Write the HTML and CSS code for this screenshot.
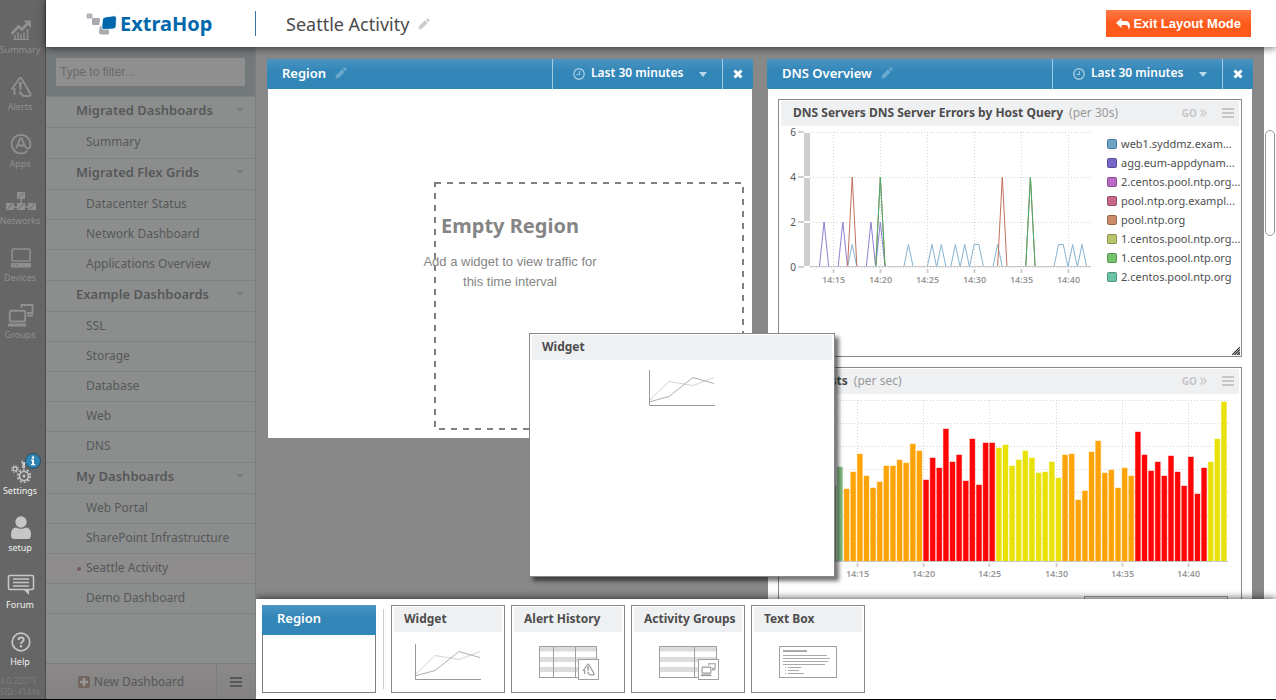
FILE: index.html
```html
<!DOCTYPE html>
<html lang="en">
<head>
    <meta charset="UTF-8">
    <meta name="viewport" content="width=device-width, initial-scale=1.0">
    <title>Seattle Activity - ExtraHop</title>
    <link rel="stylesheet" href="styles.css">
</head>
<body>
    <!-- Shared icons -->
    <svg class="defs" width="0" height="0">
        <symbol id="pencil" viewBox="0 0 12 12">
            <path d="M0.5 11.5 L1 8.3 L7 2.3 L9.7 5 L3.7 11 Z M7.8 1.5 L9 0.4 Q9.5 0 10 0.4 L11.6 2 Q12 2.5 11.6 3 L10.5 4.2 Z" fill="currentColor"/>
        </symbol>
        <symbol id="clock" viewBox="0 0 12 12">
            <circle cx="6" cy="6" r="5.2" fill="none" stroke="currentColor" stroke-width="1.4"/>
            <path d="M6.5 3 V6.5 H3.5" fill="none" stroke="currentColor" stroke-width="1.2"/>
        </symbol>
        <symbol id="close" viewBox="0 0 10 10">
            <path d="M1.5 1.5 L8.5 8.5 M8.5 1.5 L1.5 8.5" stroke="currentColor" stroke-width="3"/>
        </symbol>
        <symbol id="bars" viewBox="0 0 12 10">
            <path d="M0 1 H12 M0 5 H12 M0 9 H12" stroke="currentColor" stroke-width="2"/>
        </symbol>
        <symbol id="chevrons" viewBox="0 0 7 8">
            <path d="M0.5 0.5 L3 4 L0.5 7.5 M3.5 0.5 L6 4 L3.5 7.5" fill="none" stroke="currentColor" stroke-width="1.2"/>
        </symbol>
        <symbol id="alert" viewBox="0 0 24 22">
            <path d="M2.5 13.5 L10.5 2.5 Q11.5 1 12.5 2.5 L21.5 18 Q22 20 20 20 H14.5 L12.5 18 M5.5 19 V12" fill="none" stroke="currentColor" stroke-width="2"/>
            <path d="M9.5 6 H13 L12 14.5 H10.8 Z" fill="currentColor"/>
            <circle cx="11.4" cy="17" r="1.6" fill="currentColor"/>
        </symbol>
        <symbol id="groups" viewBox="0 0 26 24">
            <path d="M13.5 5 V2 H24.5 V10 H19" fill="none" stroke="currentColor" stroke-width="1.8"/>
            <path d="M19 12.5 H25" stroke="currentColor" stroke-width="2"/>
            <rect x="1.8" y="7.8" width="15.4" height="10.6" rx="1.5" fill="none" stroke="currentColor" stroke-width="2"/>
            <rect x="0" y="20.5" width="18" height="3" fill="currentColor"/>
        </symbol>
        <symbol id="line-chart" viewBox="0 0 66 36">
            <path d="M0 31 L20 11.5 L44 15.5 L65 7.5" fill="none" stroke="#d2d2d2"/>
            <path d="M0 32 L20 26.5 L44 7.5 L65 13.5" fill="none" stroke="#b0b0b0"/>
            <path d="M0.5 0 V35.5 H66" fill="none" stroke="#999"/>
        </symbol>
        <symbol id="table-icon" viewBox="0 0 58 32">
            <path d="M0 3 H58 M0 13.5 H58 M0 23.5 H58" stroke="#dcdcdc" stroke-width="5"/>
            <rect x="0.5" y="0.5" width="57" height="31" fill="none" stroke="#a0a0a0"/>
        </symbol>
    </svg>

    <nav class="rail">
        <div class="rail-top">
            <a href="#" class="rail-item">
                <span class="rail-icon"><svg width="20" height="20" viewBox="0 0 20 20">
                    <path d="M0.5 14 L7.5 6.5 L11 9.5 L16.5 3.5" fill="none" stroke="currentColor" stroke-width="2.8"/>
                    <path d="M12.5 0.5 H20 V8 Z" fill="currentColor"/>
                    <path d="M4 19 V15 M7 19 V12 M10 19 V14 M13 19 V12.5 M16.5 19 V9" stroke="currentColor" stroke-width="1.6"/>
                    <path d="M2 19.5 H18" stroke="currentColor"/>
                </svg></span>
                <span>Summary</span>
            </a>
            <a href="#" class="rail-item">
                <span class="rail-icon"><svg width="24" height="22"><use href="#alert"/></svg></span>
                <span>Alerts</span>
            </a>
            <a href="#" class="rail-item">
                <span class="rail-icon"><svg width="22" height="22" viewBox="0 0 22 22">
                    <path d="M17.5 17.8 A9.3 9.3 0 1 1 20.3 11 V12.5 Q20.3 15.5 17.5 15.5 Q15.8 15.5 15 13.5 L11.8 5.5 H10.2 L6 15.5 M8 12.5 H14" fill="none" stroke="currentColor" stroke-width="1.8"/>
                </svg></span>
                <span>Apps</span>
            </a>
            <a href="#" class="rail-item">
                <span class="rail-icon"><svg width="30" height="19" viewBox="0 0 30 19">
                    <path d="M11 0 H19 V7 H11 Z M0 11 H8 V18 H0 Z M11 11 H19 V18 H11 Z M22 11 H30 V18 H22 Z" fill="currentColor"/>
                    <path d="M15 7 V11 M8 15 H22" stroke="currentColor" stroke-width="1.5"/>
                    <path d="M12.5 6 L17.5 1 M1.5 17 L6.5 12 M12.5 17 L17.5 12 M23.5 17 L28.5 12" stroke="#666"/>
                </svg></span>
                <span>Networks</span>
            </a>
            <a href="#" class="rail-item">
                <span class="rail-icon"><svg width="20" height="20" viewBox="0 0 20 20">
                    <rect x="1" y="1" width="18" height="12" rx="1.5" fill="none" stroke="currentColor" stroke-width="1.6"/>
                    <rect x="0" y="15" width="20" height="4.5" fill="currentColor"/>
                    <path d="M2 17 H3.5 M5 17 H6.5" stroke="#666"/>
                </svg></span>
                <span>Devices</span>
            </a>
            <a href="#" class="rail-item">
                <span class="rail-icon"><svg width="26" height="24"><use href="#groups"/></svg></span>
                <span>Groups</span>
            </a>
        </div>
        <div class="rail-bottom">
            <a href="#" class="rail-item">
                <span class="rail-icon"><svg width="20" height="24" viewBox="0 0 20 24">
                    <circle cx="13" cy="17" r="4.5" fill="none" stroke="currentColor" stroke-width="1.6"/>
                    <circle cx="13" cy="17" r="6.3" fill="none" stroke="currentColor" stroke-width="1.8" stroke-dasharray="2 1.96"/>
                    <circle cx="13" cy="17" r="1.5" fill="currentColor"/>
                    <circle cx="4" cy="10" r="2" fill="none" stroke="currentColor" stroke-width="1.3"/>
                    <circle cx="4" cy="10" r="3.3" fill="none" stroke="currentColor" stroke-width="1.2" stroke-dasharray="1.3 1.3"/>
                    <path d="M11 9 L11.5 5 Q9 3 11.5 0.5 V3 H14.5 V1 Q16 4 14 5.5 V9 Z" fill="currentColor"/>
                </svg></span>
                <span>Settings</span>
                <svg class="badge" width="16" height="16" viewBox="0 0 16 16">
                    <circle cx="8" cy="8" r="7.5" fill="#2f84b5" stroke="#2b5065"/>
                    <path d="M6 6.5 H9 V11 H10.2 V12.3 H6 V11 H7 V7.7 H6 Z" fill="#fff"/>
                    <circle cx="8" cy="4.5" r="1.2" fill="#fff"/>
                </svg>
            </a>
            <a href="#" class="rail-item">
                <span class="rail-icon"><svg width="20" height="24" viewBox="0 0 20 24">
                    <circle cx="10" cy="6" r="5.7" fill="currentColor"/>
                    <path d="M0 19 Q0 11.5 5 11.5 Q10 14 15 11.5 Q20 11.5 20 19 Q20 23 17 23 H3 Q0 23 0 19 Z" fill="currentColor"/>
                </svg></span>
                <span>setup</span>
            </a>
            <a href="#" class="rail-item">
                <span class="rail-icon"><svg width="28" height="22" viewBox="0 0 28 22">
                    <path d="M3 1.5 H25 Q26.5 1.5 26.5 3 V14 Q26.5 15.5 25 15.5 H3 Q1.5 15.5 1.5 14 V3 Q1.5 1.5 3 1.5 Z" fill="none" stroke="currentColor" stroke-width="1.6"/>
                    <path d="M16.5 15.5 L22 21 V15.5 Z" fill="currentColor"/>
                    <path d="M6 5 H22 M6 8.5 H22 M6 12 H22" stroke="currentColor" stroke-width="1.6"/>
                </svg></span>
                <span>Forum</span>
            </a>
            <a href="#" class="rail-item">
                <span class="rail-icon"><svg width="20" height="20" viewBox="0 0 20 20">
                    <circle cx="10" cy="10" r="8.8" fill="none" stroke="currentColor" stroke-width="1.7"/>
                    <path d="M7.5 8 Q7.5 5.5 10 5.5 Q12.7 5.5 12.7 7.8 Q12.7 9 11.3 9.8 Q10 10.5 10 12" fill="none" stroke="currentColor" stroke-width="1.9"/>
                    <circle cx="10" cy="14.3" r="1.2" fill="currentColor"/>
                </svg></span>
                <span>Help</span>
            </a>
            <div class="version">
                <div>4.0.22073</div>
                <div>SID: 4144e</div>
            </div>
        </div>
    </nav>

    <div class="app">
        <header class="topbar">
            <a href="#" class="logo">
                <svg width="31" height="22" viewBox="0 0 31 22">
                    <rect x="0.5" y="0.5" width="6" height="5" rx="1.2" fill="#b3b5b8"/>
                    <path d="M7 5 H13 Q14 5 14 6 L13.5 11 Q13.5 12 12.5 12 H7.5 Q6 12 6 11 V6 Q6 5 7 5 Z" fill="#a9abae"/>
                    <path d="M14 13 H23 V20 Q23 21.500 21.500 21.500 H15.500 Q13 21.500 13 19 Z" fill="#a9abae"/>
                    <path d="M19.5 4 L28 2.8 Q30.500 2.8 30.500 5 L30 13.500 Q29.500 16 27 16 L18 16.500 Q15.500 16.500 15.800 14 L16.500 6.500 Q17 4.300 19.500 4 Z" fill="#0067ac" stroke="#fff" stroke-width="0.800"/>
                </svg>
                <span>ExtraHop</span>
            </a>
            <h1>Seattle Activity</h1>
            <button class="icon-btn edit-title" aria-label="Rename dashboard"><svg width="12" height="12"><use href="#pencil"/></svg></button>
            <button class="exit-btn">
                <svg width="14" height="12" viewBox="0 0 14 12"><path d="M5.5 0 V3 H9 Q14 3 14 8 Q14 10 12.5 11.8 Q13 7 9 7 H5.5 V10 L0 5 Z" fill="#fff"/></svg>
                <span>Exit Layout Mode</span>
            </button>
        </header>

        <div class="content">
            <aside class="sidebar">
                <div class="filter">
                    <input type="text" placeholder="Type to filter..." aria-label="Filter dashboards">
                </div>
                <button class="group">Migrated Dashboards</button>
                <ul>
                    <li><a href="#">Summary</a></li>
                </ul>
                <button class="group">Migrated Flex Grids</button>
                <ul>
                    <li><a href="#">Datacenter Status</a></li>
                    <li><a href="#">Network Dashboard</a></li>
                    <li><a href="#">Applications Overview</a></li>
                </ul>
                <button class="group">Example Dashboards</button>
                <ul>
                    <li><a href="#">SSL</a></li>
                    <li><a href="#">Storage</a></li>
                    <li><a href="#">Database</a></li>
                    <li><a href="#">Web</a></li>
                    <li><a href="#">DNS</a></li>
                </ul>
                <button class="group">My Dashboards</button>
                <ul class="last">
                    <li><a href="#">Web Portal</a></li>
                    <li><a href="#">SharePoint Infrastructure</a></li>
                    <li><a href="#" class="active">Seattle Activity</a></li>
                    <li><a href="#">Demo Dashboard</a></li>
                </ul>
                <div class="sidebar-footer">
                    <button class="new-btn">
                        <svg width="12" height="12" viewBox="0 0 12 12">
                            <rect width="12" height="12" rx="2" fill="#75675f"/>
                            <path d="M6 2 V10 M2 6 H10" stroke="#999" stroke-width="2.4"/>
                        </svg>
                        <span>New Dashboard</span>
                    </button>
                    <button class="list-btn" aria-label="Dashboard menu"><svg width="12" height="10"><use href="#bars"/></svg></button>
                </div>
            </aside>

            <div class="workspace">
                <div class="canvas">
                    <main class="regions">
                        <section class="region">
                            <div class="region-head">
                                <h2>Region</h2>
                                <button class="icon-btn" aria-label="Rename region"><svg width="12" height="12"><use href="#pencil"/></svg></button>
                                <button class="interval"><svg width="12" height="12"><use href="#clock"/></svg><span>Last 30 minutes</span><i class="caret"></i></button>
                                <button class="close" aria-label="Remove region"><svg width="10" height="10"><use href="#close"/></svg></button>
                            </div>
                            <div class="region-body empty">
                                <h3>Empty Region</h3>
                                <p>Add a widget to view traffic for this time interval</p>
                                <svg class="dropzone" width="310" height="248">
                                    <rect x="1" y="1" width="308" height="246" fill="none" stroke="#808080" stroke-width="2" stroke-dasharray="6 6"/>
                                </svg>
                            </div>
                        </section>

                        <section class="region">
                            <div class="region-head">
                                <h2>DNS Overview</h2>
                                <button class="icon-btn" aria-label="Rename region"><svg width="12" height="12"><use href="#pencil"/></svg></button>
                                <button class="interval"><svg width="12" height="12"><use href="#clock"/></svg><span>Last 30 minutes</span><i class="caret"></i></button>
                                <button class="close" aria-label="Remove region"><svg width="10" height="10"><use href="#close"/></svg></button>
                            </div>
                            <div class="region-body">
                                <article class="widget errors">
                                    <div class="widget-head">
                                        <h3>DNS Servers DNS Server Errors by Host Query</h3>
                                        <span class="unit">(per 30s)</span>
                                        <a href="#" class="go">GO <svg width="7" height="8"><use href="#chevrons"/></svg></a>
                                        <button class="menu" aria-label="Widget menu"><svg width="12" height="10"><use href="#bars"/></svg></button>
                                    </div>
                                    <div class="widget-body">
                                        <svg id="errors-chart" class="chart" width="318" height="164"></svg>
                                        <ul class="legend">
                                            <li><i class="blue"></i>web1.syddmz.exam...</li>
                                            <li><i class="violet"></i>agg.eum-appdynam...</li>
                                            <li><i class="pink"></i>2.centos.pool.ntp.org...</li>
                                            <li><i class="rose"></i>pool.ntp.org.exampl...</li>
                                            <li><i class="brown"></i>pool.ntp.org</li>
                                            <li><i class="olive"></i>1.centos.pool.ntp.org...</li>
                                            <li><i class="green"></i>1.centos.pool.ntp.org</li>
                                            <li><i class="teal"></i>2.centos.pool.ntp.org</li>
                                        </ul>
                                    </div>
                                    <svg class="resize" width="8" height="8" viewBox="0 0 8 8"><path d="M0 8 L8 0 M2.5 8 L8 2.5 M5 8 L8 5 M7 8 L8 7" stroke="#333" stroke-width="1.2"/></svg>
                                </article>
                                <article class="widget requests">
                                    <div class="widget-head">
                                        <h3>Requests</h3>
                                        <span class="unit">(per sec)</span>
                                        <a href="#" class="go">GO <svg width="7" height="8"><use href="#chevrons"/></svg></a>
                                        <button class="menu" aria-label="Widget menu"><svg width="12" height="10"><use href="#bars"/></svg></button>
                                    </div>
                                    <svg id="requests-chart" class="chart" width="454" height="190"></svg>
                                    <div class="chart-key"></div>
                                </article>
                            </div>
                        </section>
                    </main>
                    <div class="scrollbar"><div class="thumb"></div></div>

                    <!-- Widget being dragged over the canvas -->
                    <div class="widget dragging">
                        <div class="widget-head"><h3>Widget</h3></div>
                        <svg width="66" height="36"><use href="#line-chart"/></svg>
                    </div>
                </div>

                <footer class="tray">
                    <div class="tile tile-region"><h3>Region</h3></div>
                    <div class="separator"></div>
                    <div class="widget tile">
                        <div class="widget-head"><h3>Widget</h3></div>
                        <svg width="66" height="36"><use href="#line-chart"/></svg>
                    </div>
                    <div class="widget tile">
                        <div class="widget-head"><h3>Alert History</h3></div>
                        <svg class="table-tile" width="58" height="32" viewBox="0 0 58 32">
                            <use href="#table-icon" width="58" height="32"/>
                            <path d="M14.5 0 V32 M36.5 0 V32" stroke="#a0a0a0"/>
                            <rect x="39.5" y="13.5" width="20" height="20" fill="#fff" stroke="#a0a0a0"/>
                            <use href="#alert" x="42" y="17" width="15" height="13" color="#999"/>
                        </svg>
                    </div>
                    <div class="widget tile">
                        <div class="widget-head"><h3>Activity Groups</h3></div>
                        <svg class="table-tile" width="58" height="32" viewBox="0 0 58 32">
                            <use href="#table-icon" width="58" height="32"/>
                            <path d="M35.5 0 V32" stroke="#a0a0a0"/>
                            <rect x="39.5" y="13.5" width="20" height="20" fill="#fff" stroke="#a0a0a0"/>
                            <use href="#groups" x="42" y="16" width="15" height="15" color="#999"/>
                        </svg>
                    </div>
                    <div class="widget tile">
                        <div class="widget-head"><h3>Text Box</h3></div>
                        <svg class="table-tile" width="58" height="32" viewBox="0 0 58 32">
                            <rect x="0.5" y="0.5" width="57" height="31" fill="none" stroke="#a0a0a0"/>
                            <path d="M4 5 H28" stroke="#aaa" stroke-width="2"/>
                            <path d="M4 9.5 H48 M4 12.5 H51 M4 15.5 H49 M4 18.5 H46 M6 21.5 H7 M9 21.5 H22 M6 24.5 H7 M9 24.5 H20 M6 27.5 H7 M9 27.5 H25" stroke="#aaa"/>
                        </svg>
                    </div>
                </footer>
            </div>
        </div>
    </div>

    <script src="charts.js"></script>
</body>
</html>
```

FILE: styles.css
```css
* {
    margin: 0;
    padding: 0;
    box-sizing: border-box;
}

body {
    display: flex;
    height: 100vh;
    overflow: hidden;
    font-family: "Noto Sans", sans-serif;
    font-size: 12px;
    color: #4d4f50;
    background: #fff;
    border-bottom: 1px solid #000;
}

button {
    font: inherit;
    color: inherit;
    background: none;
    border: 0;
    cursor: pointer;
}

a {
    color: inherit;
    text-decoration: none;
}

ul {
    list-style: none;
}

svg {
    display: block;
    flex-shrink: 0;
}

.defs {
    position: absolute;
}

/* Left rail */
.rail {
    width: 46px;
    flex-shrink: 0;
    display: flex;
    flex-direction: column;
    justify-content: space-between;
    background: #666;
    border-right: 1px solid #4c4c4c;
    overflow: hidden;
    color: #8f8f8f;
}

.rail-item {
    position: relative;
    display: flex;
    flex-direction: column;
    align-items: center;
    width: 40px;
    height: 57px;
    padding-top: 15px;
    font-size: 9px;
    line-height: 10px;
}

.rail-icon {
    display: flex;
    align-items: center;
    justify-content: center;
    width: 30px;
    height: 30px;
    margin-left: 2px;
}

.rail-bottom .rail-item {
    color: #f2f2f2;
}

.rail-bottom .rail-icon {
    color: #c6c6c6;
}

.badge {
    position: absolute;
    top: 12px;
    left: 25px;
}

.version {
    padding: 6px 0 2px;
    font-size: 8px;
    line-height: 11px;
    color: #7c7c7c;
    white-space: nowrap;
}

/* Top bar */
.app {
    flex: 1;
    min-width: 0;
    display: flex;
    flex-direction: column;
}

.topbar {
    position: relative;
    z-index: 3;
    display: flex;
    align-items: center;
    height: 47px;
    padding-right: 25px;
    background: #fff;
    box-shadow: 0 1px 8px rgba(0, 0, 0, 0.6);
}

.logo {
    display: flex;
    align-items: center;
    gap: 3px;
    width: 210px;
    height: 25px;
    padding-left: 40px;
    border-right: 1px solid #35779f;
    font-size: 20px;
    font-weight: bold;
    color: #0067ac;
}

.topbar h1 {
    margin-left: 30px;
    font-size: 18px;
    font-weight: normal;
    color: #4a4a4a;
}

.icon-btn {
    color: #69a8cf;
}

.edit-title {
    margin-left: 9px;
    color: #ccc;
}

.exit-btn {
    display: flex;
    align-items: center;
    gap: 3px;
    height: 27px;
    margin-left: auto;
    padding: 0 10px;
    background: linear-gradient(#ff7844, #ff5a1c 50%);
    color: #fff;
    font: bold 13px "Liberation Sans", Arial, sans-serif;
}

/* Sidebar */
.content {
    flex: 1;
    min-height: 0;
    display: flex;
}

.sidebar {
    width: 210px;
    flex-shrink: 0;
    display: flex;
    flex-direction: column;
    background: #8c8e8d;
    border-right: 1px solid #7b7d7e;
    color: #56585a;
}

.filter {
    padding: 11px 10px 10px;
    background: #73787b;
}

.filter input {
    display: block;
    width: 100%;
    height: 28px;
    padding: 0 4px;
    border: 0;
    background: #8f8f8f;
    font: 12px "Liberation Sans", Arial, sans-serif;
}

.filter input::placeholder {
    color: #6b6b6b;
}

.group {
    display: flex;
    align-items: center;
    justify-content: space-between;
    height: 31px;
    padding: 0 11px 4px 30px;
    border-top: 1px solid #7e8182;
    font-size: 13px;
    font-weight: 600;
}

.group::after {
    content: "";
    border: 4px solid transparent;
    border-top: 4px solid #7a7c7d;
    border-bottom: 0;
}

.sidebar ul {
    margin-bottom: 1px;
}

.sidebar .last {
    border-bottom: 1px solid #7e8182;
}

.sidebar li a {
    display: block;
    height: 30px;
    padding-left: 40px;
    border-top: 1px solid #7e8182;
    line-height: 28px;
}

.sidebar li .active {
    padding-left: 31px;
    background: #8e8c8c;
}

.active::before {
    content: "";
    display: inline-block;
    width: 4px;
    height: 4px;
    margin-right: 5px;
    border-radius: 50%;
    background: #75605a;
    vertical-align: middle;
}

.sidebar-footer {
    display: flex;
    height: 36px;
    margin-top: auto;
    background: linear-gradient(#8b8989, #838181);
    border-top: 1px solid #7b7d7e;
}

.new-btn {
    flex: 1;
    display: flex;
    align-items: center;
    justify-content: center;
    gap: 4px;
    border-right: 1px solid #7b7d7e;
}

.list-btn {
    width: 38px;
    display: flex;
    align-items: center;
    justify-content: center;
}

/* Workspace */
.workspace {
    flex: 1;
    min-width: 0;
    display: flex;
    flex-direction: column;
}

.canvas {
    position: relative;
    flex: 1;
    min-height: 0;
    display: flex;
    background: #888;
}

.regions {
    flex: 1;
    min-width: 0;
    display: flex;
    align-items: flex-start;
    gap: 14px;
    padding: 12px 11px 0;
    overflow: hidden;
}

.scrollbar {
    width: 12px;
    padding: 83px 1px 0;
    background: #fff;
}

.thumb {
    height: 106px;
    border: 1px solid #999;
    border-radius: 5px;
}

.region {
    flex: 1;
    min-width: 0;
}

.region-head {
    display: flex;
    align-items: center;
    height: 30px;
    padding-left: 15px;
    background: linear-gradient(#4a95c3, #3386b8 40%);
    color: #fff;
}

.region-head h2 {
    padding-bottom: 3px;
    font-size: 13px;
    font-weight: 600;
}

.region-head .icon-btn {
    margin-left: 9px;
    padding-bottom: 3px;
}

.region-head .interval,
.region-head .close {
    display: flex;
    align-items: center;
    height: 100%;
    border-left: 1px solid #a3cbe2;
}

.interval {
    width: 170px;
    margin-left: auto;
    padding: 0 15px 0 20px;
    font-weight: 600;
}

.interval span {
    padding-bottom: 3px;
}

.interval svg {
    margin-right: 6px;
    color: #a3cbe2;
}

.caret {
    margin-left: auto;
    border: 4px solid transparent;
    border-top: 5px solid #b9d8ea;
    border-bottom: 0;
}

.region-head .close {
    width: 31px;
    justify-content: center;
}

.region-body {
    display: flex;
    flex-direction: column;
    gap: 10px;
    margin: 0 1px;
    padding: 10px;
    background: #fff;
}

.empty {
    position: relative;
    align-items: center;
    min-height: 349px;
    padding-top: 121px;
    color: #858585;
}

.empty h3 {
    font-size: 20px;
    line-height: 32px;
}

.empty p {
    width: 180px;
    font: 13px/20px "Liberation Sans", Arial, sans-serif;
    text-align: center;
}

.dropzone {
    position: absolute;
    right: 8px;
    bottom: 8px;
}

/* Widgets */
.widget {
    background: #fff;
    border: 1px solid #888;
    padding: 1px 2px;
}

.widget-head {
    display: flex;
    align-items: center;
    height: 25px;
    padding: 0 5px 2px 10px;
    background: #eff0f2;
}

.widget-head h3 {
    font-size: 12px;
    font-weight: bold;
    color: #4d4d4d;
    white-space: nowrap;
}

.region .widget-head {
    padding-left: 12px;
}

.unit {
    margin-left: 6px;
    color: #999;
}

.go {
    display: flex;
    align-items: center;
    gap: 3px;
    margin-left: auto;
    font-size: 10px;
    font-weight: bold;
    color: #c6c6c6;
}

.menu {
    margin-left: 15px;
    color: #c6c6c6;
}

.errors {
    position: relative;
    height: 258px;
}

.widget-body {
    display: flex;
}

.resize {
    position: absolute;
    right: 1px;
    bottom: 1px;
}

.legend {
    flex: 1;
    padding: 8px 0 0 8px;
}

.legend li {
    display: flex;
    align-items: center;
    gap: 4px;
    height: 19px;
    font-size: 11px;
    white-space: nowrap;
}

.legend i {
    width: 10px;
    height: 10px;
    border: 1px solid rgba(0, 0, 0, 0.25);
    border-radius: 2px;
}

.legend .blue { background: #6ba3cb; }
.legend .violet { background: #7668c8; }
.legend .pink { background: #bb68c8; }
.legend .rose { background: #c8688a; }
.legend .brown { background: #c88d68; }
.legend .olive { background: #bbc468; }
.legend .green { background: #72c468; }
.legend .teal { background: #68c4a3; }

.chart text {
    font-size: 9px;
    font-weight: 600;
    fill: #999;
    text-anchor: middle;
}

.chart .y-label {
    font-size: 10px;
    font-weight: normal;
    fill: #555;
    text-anchor: end;
}

.grid {
    stroke: #d4d4d4;
    stroke-dasharray: 1 2;
}

.axis {
    stroke: #c8c8c8;
}

.tick {
    stroke: #d0d0d0;
    stroke-width: 2;
}

.line {
    fill: none;
    stroke-width: 1;
}

.bar {
    stroke-opacity: 0.4;
}

.chart-key {
    width: 144px;
    height: 30px;
    margin: 12px 11px 0 auto;
    border: 1px solid #999;
    background: #f2f2f2;
}

.dragging {
    position: absolute;
    z-index: 1;
    left: 273px;
    top: 286px;
    width: 306px;
    height: 244px;
    box-shadow: 4px 4px 4px rgba(0, 0, 0, 0.55);
}

.dragging > svg {
    margin: 10px auto 0;
}

/* Tray */
.tray {
    position: relative;
    z-index: 2;
    display: flex;
    gap: 6px;
    height: 100px;
    padding: 6px;
    background: #fff;
    box-shadow: 0 0 8px rgba(0, 0, 0, 0.8);
    clip-path: inset(-10px 0 0 0);
}

.tile {
    width: 114px;
    height: 88px;
    cursor: move;
}

.tile > svg {
    margin: 12px auto 0;
}

.tile > .table-tile {
    margin-top: 14px;
    overflow: visible;
}

.tile-region {
    border: 1px solid #808080;
    border-top: 0;
}

.tile-region h3 {
    height: 30px;
    margin: 0 -1px;
    padding-left: 15px;
    background: linear-gradient(#4a95c3, #3386b8 40%);
    color: #fff;
    font-size: 13px;
    font-weight: 600;
    line-height: 27px;
}

.separator {
    width: 1px;
    height: 80px;
    margin: 4px 1px;
    background: #ccc;
}
```

FILE: charts.js
```javascript
// Small helper for building SVG nodes
function add(parent, tag, attrs, text) {
    const el = document.createElementNS("http://www.w3.org/2000/svg", tag);
    for (const key in attrs) el.setAttribute(key, attrs[key]);
    if (text !== undefined) el.textContent = text;
    parent.appendChild(el);
    return el;
}

const times = ["14:15", "14:20", "14:25", "14:30", "14:35", "14:40"];

// Time ticks and vertical grid lines
function drawTimes(plot, start, step, height) {
    times.forEach((time, i) => {
        const x = Math.round(start + i * step) + 0.5;
        add(plot, "line", { class: "grid", x1: x, x2: x, y1: 0, y2: height });
        add(plot, "line", { class: "tick", x1: x, x2: x, y1: height + 2, y2: height + 6 });
        add(plot, "text", { x: x, y: height + 16 }, time);
    });
}

// DNS server errors, one slot is 30 seconds
function drawErrors() {
    const plot = add(document.getElementById("errors-chart"), "g", { transform: "translate(29, 6)" });
    const height = 135, width = 281, slot = 4.69;

    add(plot, "rect", { x: -6, y: 0, width: 6, height: height, fill: "#cecece" });
    [0, 2, 4, 6].forEach(value => {
        const y = height - value * 22.5;
        const line = Math.round(y) + 0.5;
        add(plot, "line", { class: "grid", x1: 0, x2: width, y1: line, y2: line });
        add(plot, "line", { class: "tick", x1: -12, x2: -6, y1: y, y2: y });
        add(plot, "line", { x1: -6, x2: 0, y1: y, y2: y, stroke: "#fff", "stroke-width": 2 });
        add(plot, "text", { class: "y-label", x: -14, y: y + 4 }, value);
    });
    drawTimes(plot, 23, 46.9, height);

    const series = [
        { color: "#85b3d2", value: 1, at: [9, 21, 26, 28, 31, 33, 35, 36, 40, 53, 54, 56, 58] },
        { color: "#8f80d2", value: 2, at: [3, 7, 13, 15] },
        { color: "#c1705c", value: 4, at: [9, 15, 41, 47] },
        { color: "#45b06c", value: 4, at: [15, 47] }
    ];
    series.forEach(s => {
        let d = "";
        s.at.forEach(n => {
            const y = height - s.value * 22.5;
            if (!s.at.includes(n - 1)) d += `M${(n - 1) * slot} ${height} `;
            d += `L${n * slot} ${y} `;
            if (!s.at.includes(n + 1)) d += `L${(n + 1) * slot} ${height} `;
        });
        add(plot, "path", { class: "line", d: d, stroke: s.color });
    });
    add(plot, "line", { class: "axis", x1: 0, x2: width, y1: height - 0.5, y2: height - 0.5 });
}

// Requests per second, coloured by alert level
function drawRequests() {
    const plot = add(document.getElementById("requests-chart"), "g", { transform: "translate(29, 6)" });
    const height = 161, width = 418, slot = 6.62;
    const bars = [
        ["#86bf86", [70, 76, 82, 75, 94]],
        ["#ffa408", [72, 89, 107, 85, 73, 79, 95, 95, 101, 98, 117, 110]],
        ["#ff0505", [81, 103, 93, 132, 99, 106, 80, 122, 76, 118, 118]],
        ["#e9e208", [113, 116, 95, 101, 110, 103, 88, 89, 99, 83]],
        ["#ffa408", [106, 107, 61, 70, 109, 120, 88, 91, 73, 93, 85]],
        ["#ff0505", [129, 106, 90, 99, 85, 105, 89, 75, 104, 67, 93]],
        ["#e9e208", [99, 122, 159]]
    ];

    for (let y = 0; y < height; y += 23) {
        add(plot, "line", { class: "grid", x1: 0, x2: width, y1: y + 0.5, y2: y + 0.5 });
    }
    drawTimes(plot, 47, 66.2, height);
    let n = 0;
    bars.forEach(([color, values]) => {
        values.forEach(value => {
            add(plot, "rect", {
                class: "bar", x: 1 + n * slot, y: height - value,
                width: 5, height: value, fill: color, stroke: color
            });
            n++;
        });
    });
    add(plot, "line", { class: "axis", x1: 0, x2: width, y1: height + 0.5, y2: height + 0.5 });
}

drawErrors();
drawRequests();
```
